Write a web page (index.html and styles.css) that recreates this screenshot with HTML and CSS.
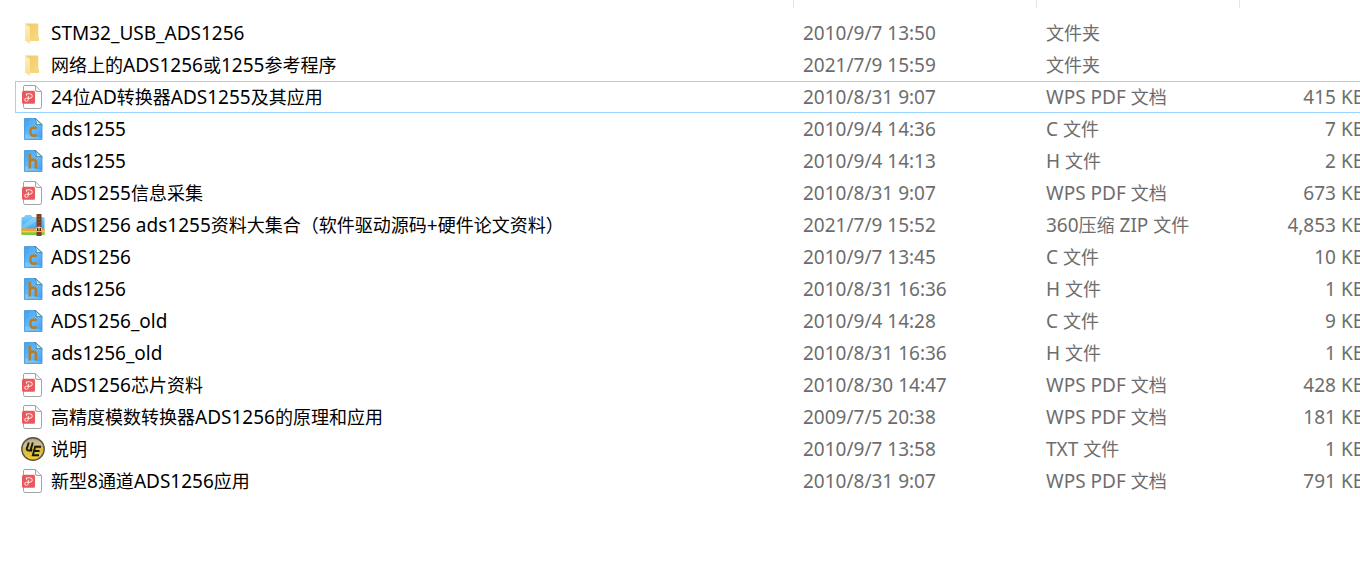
FILE: index.html
```html
<!DOCTYPE html>
<html lang="zh-CN">
<head>
<meta charset="utf-8">
<title>ADS1256</title>
<link rel="stylesheet" href="styles.css">
</head>
<body>
<svg class="sprite" aria-hidden="true">
  <defs>
    <linearGradient id="g-folder" x1="0" y1="0" x2="1" y2="1"><stop offset="0" stop-color="#edcb6c"/><stop offset="1" stop-color="#fad87c"/></linearGradient>
    <linearGradient id="g-flap" x1="0" y1="0" x2="0" y2="1"><stop offset="0" stop-color="#ffefb5"/><stop offset="1" stop-color="#fbdf92"/></linearGradient>
    <linearGradient id="g-code" x1="0" y1="0" x2="1" y2="1"><stop offset="0" stop-color="#459ee8"/><stop offset=".5" stop-color="#62bcff"/><stop offset="1" stop-color="#429ff2"/></linearGradient>
    <linearGradient id="g-zip" x1="0" y1="0" x2="0" y2="1"><stop offset="0" stop-color="#7fd0fb"/><stop offset="1" stop-color="#3ca6ee"/></linearGradient>
    <linearGradient id="g-ue" x1="0" y1="0" x2="0" y2="1"><stop offset="0" stop-color="#8f8770"/><stop offset=".45" stop-color="#d3b64a"/><stop offset="1" stop-color="#f3cd2c"/></linearGradient>
    <symbol id="folder" viewBox="0 0 24 24">
      <path d="M4 2.500H17.300V15.500L18 16.200V20H9Z" fill="url(#g-folder)"/>
      <path d="M4 2.500L9 6V22.500L4 19.800Z" fill="url(#g-flap)"/>
    </symbol>
    <symbol id="pdf" viewBox="0 0 24 24">
      <path d="M4 .5H14.500L20.500 6.500V21.500Q20.500 23.500 19 23.500H4Q2.500 23.500 2.500 21.500V2Q2.500 .5 4 .5Z" fill="#fff" stroke="#a3a3a3"/>
      <path d="M14.500 .8V5Q14.500 6.500 16 6.500H20.300" fill="#f4f4f4" stroke="#a3a3a3"/>
      <rect x="1" y="5.700" width="13" height="13" rx="1.500" fill="#e95a5c"/>
      <path d="M5.500 10.800V8.800H8.800Q11.300 8.800 11.300 11T8.800 13.200H5.500Q3.700 13.300 3.700 14.800 3.700 16.300 5.300 16.300 7.300 16.200 7.300 14.300V10.800" fill="none" stroke="#fff" stroke-width=".9"/>
    </symbol>
    <symbol id="code" viewBox="0 0 24 24">
      <path d="M3.500 1.500H14.500L21 7.500V22.500H3.500Z" fill="url(#g-code)" stroke="#3c92d8" stroke-width=".8"/>
      <path d="M4 17L20.500 21V22H4Z" fill="#9ad8ff" opacity=".4"/>
      <path d="M14 1.200L21.300 8Q17.500 6.800 15 8 16 4.500 14 1.200Z" fill="#b9e8f5" stroke="#2f7590" stroke-width=".7"/>
    </symbol>
    <symbol id="c-file" viewBox="0 0 24 24">
      <use href="#code"/>
      <path d="M15.700 11.300Q14.500 10.500 13 10.500 9.300 10.700 9.300 14.700T13 18.700Q14.700 18.700 15.700 17.800" fill="none" stroke="#b57d2a" stroke-width="2.600"/>
    </symbol>
    <symbol id="h-file" viewBox="0 0 24 24">
      <use href="#code"/>
      <path d="M8.800 5V19.500M8.800 13Q9.500 10.500 12.200 10.500 14.900 10.500 14.900 13.500V19.500" fill="none" stroke="#b57d2a" stroke-width="2.600"/>
    </symbol>
    <symbol id="zip" viewBox="0 0 24 24">
      <path d="M.5 5.500Q.5 4 2 4H3L4.500 2H10L11.500 4H22Q23.500 4 23.500 5.500V17H.5Z" fill="url(#g-zip)"/>
      <path d="M.5 13L13 4H16V8L2 17H.5Z" fill="#b3e6ff" opacity=".35"/>
      <path d="M.3 15.500H23.700V19H.3Z" fill="#ff9d23"/>
      <path d="M.3 18.700H23.700V21Q23.700 22 22.500 22H1.500Q.3 22 .3 21Z" fill="#7bc943"/>
      <path d="M.3 18.300H23.700V19.300H.3Z" fill="#ffe14b"/>
      <path d="M15.500 1H20.500V23H15.500Z" fill="#7c3f22"/>
      <path d="M18 3V13" stroke="#a96640" stroke-dasharray="1 2"/>
      <path d="M15.500 14.500H20.500V18.500H15.500Z" fill="#58220f" stroke="#dfc08a"/>
      <path d="M18 13.500V17.500" stroke="#fff3bd"/>
    </symbol>
    <symbol id="ultraedit" viewBox="0 0 24 24">
      <circle cx="12" cy="12" r="11.200" fill="url(#g-ue)" stroke="#5b5545" stroke-width="1.400"/>
      <path d="M2 11Q3 2.500 12 2 20 2.500 22 9 12 5.500 2 11Z" fill="#fff" opacity=".3"/>
      <path d="M7.800 5.500L5.800 11.500Q5.500 13.500 8 13.500H9.500L11.800 5.500M10.700 12L10 14.500" fill="none" stroke="#191713" stroke-width="1.900"/>
      <path d="M20 9.800H14.200L11.800 18.200H18M13.300 14H18.500" fill="none" stroke="#191713" stroke-width="1.900"/>
    </symbol>
  </defs>
</svg>
<main class="explorer">
<table class="files">
  <colgroup><col class="col-name"><col class="col-date"><col class="col-type"><col class="col-size"></colgroup>
  <thead><tr><th></th><th></th><th></th><th></th></tr></thead>
  <tbody>
    <tr><td><div class="name"><svg class="icon"><use href="#folder"/></svg><span>STM32_USB_ADS1256</span></div></td><td>2010/9/7 13:50</td><td><span class="zh">文件夹</span></td><td></td></tr>
    <tr><td><div class="name"><svg class="icon"><use href="#folder"/></svg><span><span class="zh">网络上的</span>ADS1256<span class="zh">或</span>1255<span class="zh">参考程序</span></span></div></td><td>2021/7/9 15:59</td><td><span class="zh">文件夹</span></td><td></td></tr>
    <tr class="focused"><td><div class="name"><svg class="icon"><use href="#pdf"/></svg><span>24<span class="zh">位</span>AD<span class="zh">转换器</span>ADS1255<span class="zh">及其应用</span></span></div></td><td>2010/8/31 9:07</td><td>WPS PDF <span class="zh">文档</span></td><td>415 KB</td></tr>
    <tr><td><div class="name"><svg class="icon"><use href="#c-file"/></svg><span>ads1255</span></div></td><td>2010/9/4 14:36</td><td>C <span class="zh">文件</span></td><td>7 KB</td></tr>
    <tr><td><div class="name"><svg class="icon"><use href="#h-file"/></svg><span>ads1255</span></div></td><td>2010/9/4 14:13</td><td>H <span class="zh">文件</span></td><td>2 KB</td></tr>
    <tr><td><div class="name"><svg class="icon"><use href="#pdf"/></svg><span>ADS1255<span class="zh">信息采集</span></span></div></td><td>2010/8/31 9:07</td><td>WPS PDF <span class="zh">文档</span></td><td>673 KB</td></tr>
    <tr><td><div class="name"><svg class="icon"><use href="#zip"/></svg><span>ADS1256 ads1255<span class="zh">资料大集合（软件驱动源码</span>+<span class="zh">硬件论文资料）</span></span></div></td><td>2021/7/9 15:52</td><td>360<span class="zh">压缩</span> ZIP <span class="zh">文件</span></td><td>4,853 KB</td></tr>
    <tr><td><div class="name"><svg class="icon"><use href="#c-file"/></svg><span>ADS1256</span></div></td><td>2010/9/7 13:45</td><td>C <span class="zh">文件</span></td><td>10 KB</td></tr>
    <tr><td><div class="name"><svg class="icon"><use href="#h-file"/></svg><span>ads1256</span></div></td><td>2010/8/31 16:36</td><td>H <span class="zh">文件</span></td><td>1 KB</td></tr>
    <tr><td><div class="name"><svg class="icon"><use href="#c-file"/></svg><span>ADS1256_old</span></div></td><td>2010/9/4 14:28</td><td>C <span class="zh">文件</span></td><td>9 KB</td></tr>
    <tr><td><div class="name"><svg class="icon"><use href="#h-file"/></svg><span>ads1256_old</span></div></td><td>2010/8/31 16:36</td><td>H <span class="zh">文件</span></td><td>1 KB</td></tr>
    <tr><td><div class="name"><svg class="icon"><use href="#pdf"/></svg><span>ADS1256<span class="zh">芯片资料</span></span></div></td><td>2010/8/30 14:47</td><td>WPS PDF <span class="zh">文档</span></td><td>428 KB</td></tr>
    <tr><td><div class="name"><svg class="icon"><use href="#pdf"/></svg><span><span class="zh">高精度模数转换器</span>ADS1256<span class="zh">的原理和应用</span></span></div></td><td>2009/7/5 20:38</td><td>WPS PDF <span class="zh">文档</span></td><td>181 KB</td></tr>
    <tr><td><div class="name"><svg class="icon"><use href="#ultraedit"/></svg><span><span class="zh">说明</span></span></div></td><td>2010/9/7 13:58</td><td>TXT <span class="zh">文件</span></td><td>1 KB</td></tr>
    <tr><td><div class="name"><svg class="icon"><use href="#pdf"/></svg><span><span class="zh">新型</span>8<span class="zh">通道</span>ADS1256<span class="zh">应用</span></span></div></td><td>2010/8/31 9:07</td><td>WPS PDF <span class="zh">文档</span></td><td>791 KB</td></tr>
  </tbody>
</table>
</main>
</body>
</html>
```
FILE: styles.css
```css
body {
  margin: 0;
  background: #fff;
  color: #000;
  font-family: "Noto Sans", "Noto Sans CJK SC", sans-serif;
  font-size: 19px;
  line-height: 24px;
}

.sprite {
  position: absolute;
  width: 0;
  height: 0;
}

.explorer {
  padding-left: 15px;
  overflow: hidden;
}

/* The size column runs slightly past the window edge. */
.files {
  width: calc(100% + 5px);
  table-layout: fixed;
  border-collapse: separate;
  border-spacing: 0;
  white-space: nowrap;
}

.col-date { width: 243px; }
.col-type { width: 203px; }
.col-size { width: 125px; }

th {
  height: 8px;
  padding: 0;
  border-right: 1px solid #e5e5e5;
}

th:last-child { border-right: 0; }

tbody::before {
  content: "";
  display: block;
  height: 9px;
}

td {
  height: 32px;
  padding: 0 0 0 9px;
  color: #6d6d6d;
}

td:first-child {
  padding-left: 6px;
  color: #000;
}

td:last-child { text-align: right; }

.focused {
  outline: 1px solid #99d1ff;
  outline-offset: -1px;
}

.name {
  display: flex;
  align-items: center;
  gap: 6px;
}

.icon {
  flex: none;
  width: 24px;
  height: 24px;
}

.zh {
  font-family: "Noto Sans CJK SC", sans-serif;
  font-size: 18px;
  line-height: 1;
}
```
